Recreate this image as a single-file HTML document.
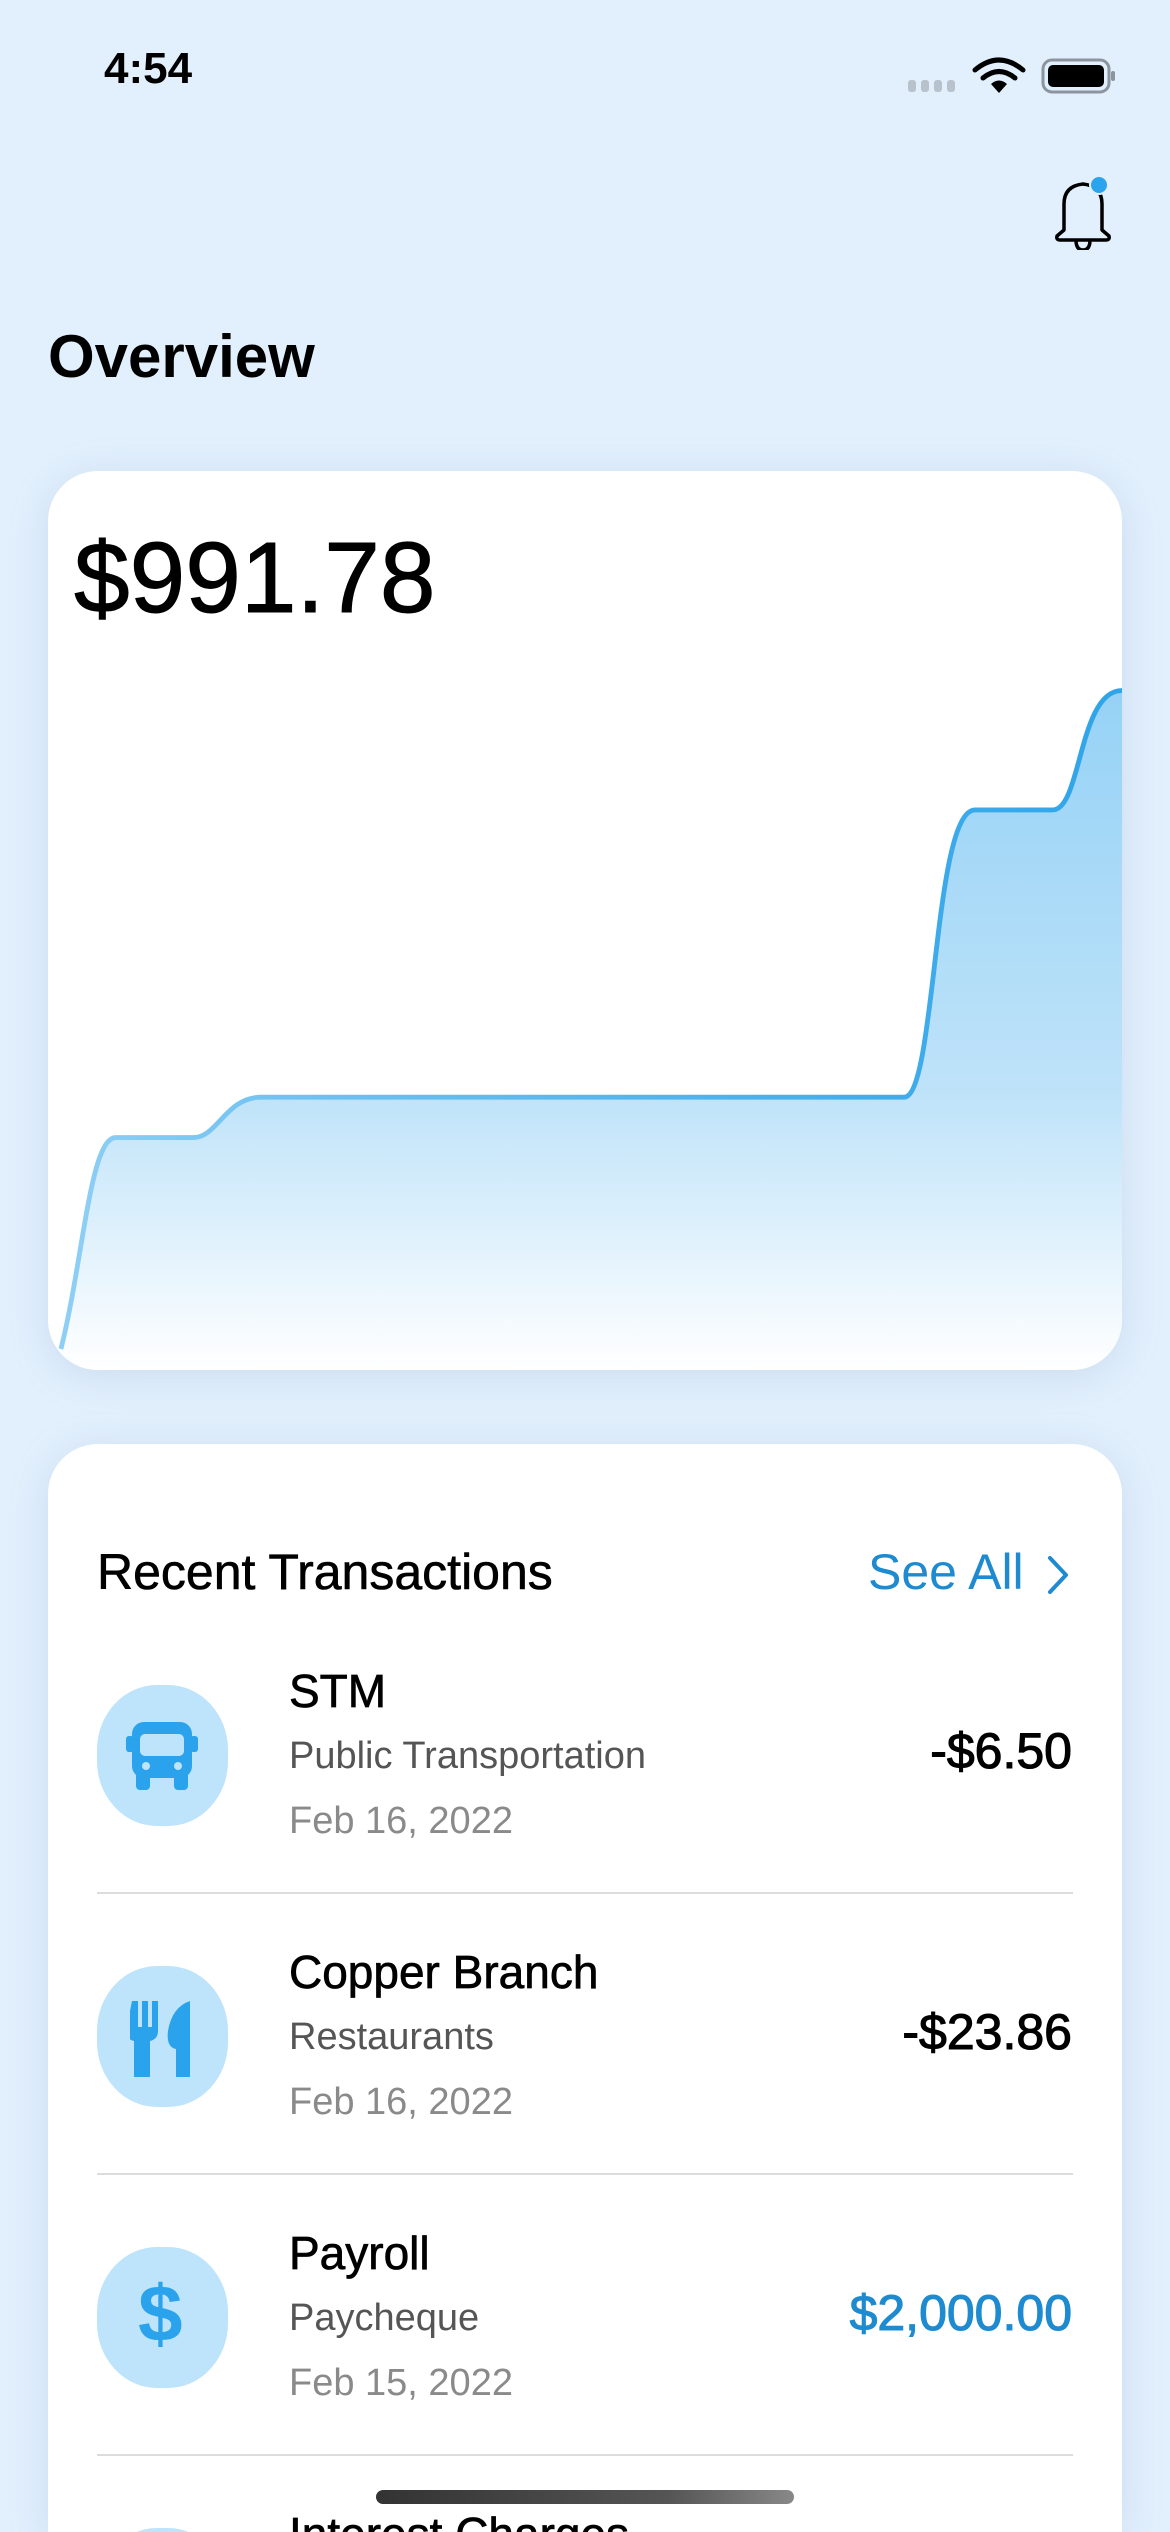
<!DOCTYPE html>
<html style="width:1170px;height:2532px;overflow:hidden"><head><meta charset="utf-8"><style>
*{margin:0;padding:0;box-sizing:border-box}
body{width:1170px;height:2532px;overflow:hidden;background:#e2f0fd;font-family:"Liberation Sans",sans-serif;position:relative}
.a{position:absolute;white-space:nowrap}
.card{position:absolute;background:#fff;border-radius:50px;box-shadow:0 6px 40px rgba(120,150,190,0.22)}
.title{font-size:46px;color:#000;-webkit-text-stroke:0.7px #000}
.sub{font-size:38px;color:#555}
.date{font-size:38px;color:#8a8a8a}
.amt{font-size:50px;color:#000;right:98px;text-align:right;-webkit-text-stroke:1.1px #000}
.ic{position:absolute;left:97px;width:131px;height:141px;border-radius:46%;background:#bde4fb}
.div{position:absolute;left:97px;width:976px;height:2px;background:#dcdcdc}
</style></head><body>
<div class="a" style="left:104px;top:44px;font-size:44px;font-weight:bold">4:54</div>
<svg class="a" style="left:900px;top:50px" width="220" height="50" viewBox="0 0 220 50">
 <g fill="#b8c2cc"><rect x="8" y="30" width="8" height="12" rx="3"/><rect x="21" y="30" width="8" height="12" rx="3"/><rect x="34" y="30" width="8" height="12" rx="3"/><rect x="47" y="30" width="8" height="12" rx="3"/></g>
 <g fill="none" stroke="#000" stroke-width="5" stroke-linecap="round"><path d="M75 20 Q99 0 123 20"/><path d="M83 28 Q99 15 115 28"/></g>
 <path d="M91 34 Q99 27 107 34 L99 43 Z" fill="#000"/>
 <rect x="143" y="10" width="66" height="32" rx="9" fill="none" stroke="#8c959e" stroke-width="3"/>
 <rect x="148" y="15" width="56" height="22" rx="5" fill="#000"/>
 <rect x="211" y="21" width="4" height="10" rx="2" fill="#8c959e"/>
</svg>
<svg class="a" style="left:1050px;top:170px" width="70" height="80" viewBox="0 0 70 80">
 <path d="M14 60 L14 34 Q14 16 33 14 Q52 16 52 34 L52 60 L59 66 Q60 70 56 70 L10 70 Q6 70 7 66 Z" fill="none" stroke="#000" stroke-width="3.5" stroke-linejoin="round"/>
 <path d="M26 70 Q26 80 33 80 Q40 80 40 70" fill="none" stroke="#000" stroke-width="3.5"/>
 <circle cx="49" cy="15" r="10" fill="#e2f0fd"/>
 <circle cx="49" cy="15" r="8" fill="#2aa4ec"/>
</svg>
<div class="a" style="left:48px;top:322px;font-size:60px;font-weight:bold">Overview</div>

<div class="card" style="left:48px;top:471px;width:1074px;height:899px;overflow:hidden">
 <div class="a" style="left:26px;top:50px;font-size:100px;-webkit-text-stroke:1px #000">$991.78</div>
 <svg class="a" style="left:0;top:0" width="1074" height="899" viewBox="30 292 665 557" preserveAspectRatio="none">
  <defs>
   <linearGradient id="g" x1="0" y1="0" x2="0" y2="1"><stop offset="0" stop-color="#96d2f6"/><stop offset="0.6" stop-color="#bfe3f9"/><stop offset="1" stop-color="#ffffff"/></linearGradient>
   <linearGradient id="l" x1="0" y1="0" x2="1" y2="0"><stop offset="0" stop-color="#8fcff5"/><stop offset="0.25" stop-color="#6cc0f0"/><stop offset="1" stop-color="#2fa4e9"/></linearGradient>
  </defs>
  <path d="M38 836 C52 780 56 705 72 705 L120 705 C135 705 140 680 162 680 L560 680 C580 680 578 502 604 502 L652 502 C670 502 668 428 695 428 L695 849 L38 849 Z" fill="url(#g)"/>
  <path d="M38 836 C52 780 56 705 72 705 L120 705 C135 705 140 680 162 680 L560 680 C580 680 578 502 604 502 L652 502 C670 502 668 428 695 428" fill="none" stroke="url(#l)" stroke-width="3"/>
 </svg>
</div>

<div class="card" style="left:48px;top:1444px;width:1074px;height:1088px;border-bottom-left-radius:0;border-bottom-right-radius:0;overflow:hidden">
 <div class="ic" style="top:1084px;left:49px"></div>
 <div class="a title" style="left:241px;top:1063px">Interest Charges</div>
</div>
<div class="a" style="left:97px;top:1543px;font-size:50px;-webkit-text-stroke:0.6px #000">Recent Transactions</div>
<div class="a" style="left:868px;top:1543px;font-size:50px;color:#1e8ad0">See All</div>
<svg class="a" style="left:1040px;top:1550px" width="36" height="50" viewBox="0 0 36 50"><path d="M10 8 L26 25 L10 42" fill="none" stroke="#1e8ad0" stroke-width="4" stroke-linecap="round" stroke-linejoin="round"/></svg>

<div class="ic" style="top:1685px"></div>
<svg class="a" style="left:124px;top:1722px" width="76" height="70" viewBox="0 0 76 70">
 <rect x="8" y="0" width="60" height="56" rx="12" fill="#2aa2ec"/>
 <rect x="2" y="14" width="8" height="16" rx="3" fill="#2aa2ec"/><rect x="66" y="14" width="8" height="16" rx="3" fill="#2aa2ec"/>
 <rect x="16" y="12" width="44" height="22" rx="5" fill="#bde4fb"/>
 <circle cx="22" cy="44" r="4" fill="#bde4fb"/><circle cx="54" cy="44" r="4" fill="#bde4fb"/>
 <rect x="12" y="50" width="14" height="18" rx="4" fill="#2aa2ec"/><rect x="50" y="50" width="14" height="18" rx="4" fill="#2aa2ec"/>
</svg>
<div class="a title" style="left:289px;top:1664px">STM</div>
<div class="a sub" style="left:289px;top:1735px">Public Transportation</div>
<div class="a date" style="left:289px;top:1800px">Feb 16, 2022</div>
<div class="a amt" style="top:1722px">-$6.50</div>
<div class="div" style="top:1892px"></div>

<div class="ic" style="top:1966px"></div>
<svg class="a" style="left:130px;top:1999px" width="66" height="80" viewBox="0 0 66 80">
 <path d="M2 2 h6 v26 h4 v-26 h6 v26 h4 v-26 h6 v30 q0 8 -8 10 v36 h-16 v-36 q-8 -2 -8 -10 z" fill="#2aa2ec"/>
 <path d="M60 2 L60 78 L46 78 L46 50 Q36 48 38 32 Q42 8 60 2 Z" fill="#2aa2ec"/>
</svg>
<div class="a title" style="left:289px;top:1945px">Copper Branch</div>
<div class="a sub" style="left:289px;top:2016px">Restaurants</div>
<div class="a date" style="left:289px;top:2081px">Feb 16, 2022</div>
<div class="a amt" style="top:2003px">-$23.86</div>
<div class="div" style="top:2173px"></div>

<div class="ic" style="top:2247px"></div>
<div class="a" style="left:138px;top:2268px;font-size:80px;font-weight:bold;color:#2aa2ec">$</div>
<div class="a title" style="left:289px;top:2226px">Payroll</div>
<div class="a sub" style="left:289px;top:2297px">Paycheque</div>
<div class="a date" style="left:289px;top:2362px">Feb 15, 2022</div>
<div class="a amt" style="top:2284px;color:#1e8ad0;-webkit-text-stroke:1.1px #1e8ad0">$2,000.00</div>
<div class="div" style="top:2454px"></div>

<div class="a" style="left:376px;top:2490px;width:418px;height:14px;border-radius:7px;background:linear-gradient(90deg,#333,#555 70%,#888)"></div>
</body></html>
